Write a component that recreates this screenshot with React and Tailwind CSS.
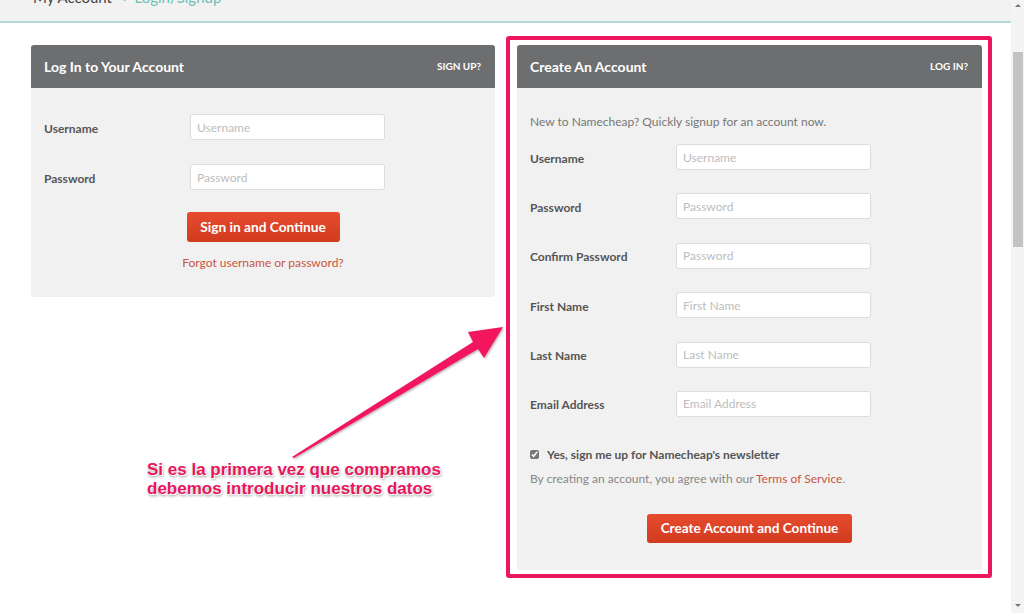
import { useState } from 'react'

const font = { fontFamily: 'Lato, "Open Sans", sans-serif' }

function Field({ label, placeholder, type = 'text' }) {
  return (
    <div className="flex items-center">
      <label className="w-[146px] pt-[3px] text-[12px] font-bold text-[#555]">{label}</label>
      <input
        type={type}
        placeholder={placeholder}
        className="h-[26px] w-[195px] rounded-[3px] border border-[#dcdcdc] bg-white px-[6px] text-[12px] text-[#555] outline-none placeholder:text-[#bdbdbd]"
      />
    </div>
  )
}

function PanelHeader({ title, link }) {
  return (
    <div className="flex h-[43px] items-center justify-between rounded-t-[3px] bg-[#6d6e70] pl-[13px] pr-[14px]">
      <h2 className="text-[14px] font-bold text-white">{title}</h2>
      <a href="#" className="text-[10px] font-bold text-white">{link}</a>
    </div>
  )
}

function LoginPanel() {
  return (
    <div className="mt-[9px] w-[464px]">
      <PanelHeader title="Log In to Your Account" link="SIGN UP?" />
      <div className="flex h-[209px] flex-col rounded-b-[3px] bg-[#f1f1f1] px-[13px] pt-[26px]">
        <div className="flex flex-col gap-[24px]">
          <Field label="Username" placeholder="Username" />
          <Field label="Password" placeholder="Password" type="password" />
        </div>
        <button className="mx-auto mt-[22px] h-[30px] w-[153px] rounded-[3px] bg-gradient-to-b from-[#e64b2e] to-[#d23b20] text-[13.7px] font-bold text-white">
          Sign in and Continue
        </button>
        <a href="#" className="mx-auto mt-[12px] text-[12px] text-[#c8563f]">Forgot username or password?</a>
      </div>
    </div>
  )
}

function SignupPanel() {
  const [newsletter, setNewsletter] = useState(true)
  return (
    <div className="ml-[11px] w-[486px] rounded-[3px] border-4 border-[#ee1560] pb-[4px] pl-[7px] pr-[2px] pt-[5px]">
      <div className="w-[465px]">
        <PanelHeader title="Create An Account" link="LOG IN?" />
        <div className="flex flex-col rounded-b-[3px] bg-[#f1f1f1] px-[13px] pb-[27px] pt-[26px]">
          <p className="text-[12px] leading-[16px] text-[#777]">New to Namecheap? Quickly signup for an account now.</p>
          <div className="mt-[14px] flex flex-col gap-[23.4px]">
            <Field label="Username" placeholder="Username" />
            <Field label="Password" placeholder="Password" type="password" />
            <Field label="Confirm Password" placeholder="Password" type="password" />
            <Field label="First Name" placeholder="First Name" />
            <Field label="Last Name" placeholder="Last Name" />
            <Field label="Email Address" placeholder="Email Address" />
          </div>
          <label className="mt-[30px] flex h-[16px] items-center gap-[8px] text-[12px] font-bold text-[#555]">
            <input
              type="checkbox"
              checked={newsletter}
              onChange={() => setNewsletter(!newsletter)}
              className="h-[9px] w-[9px] accent-[#777]"
            />
            Yes, sign me up for Namecheap's newsletter
          </label>
          <p className="mt-[8px] text-[12px] leading-[16px] text-[#888]">
            By creating an account, you agree with our <a href="#" className="text-[#c8563f]">Terms of Service</a>.
          </p>
          <button className="mx-auto mt-[27px] h-[29px] w-[205px] rounded-[3px] bg-gradient-to-b from-[#e64b2e] to-[#d23b20] text-[13.6px] font-bold text-white">
            Create Account and Continue
          </button>
        </div>
      </div>
    </div>
  )
}

function Annotation() {
  return (
    <>
      <svg className="pointer-events-none absolute left-0 top-0" width="1010" height="613">
        <defs>
          <filter id="sh" x="-10%" y="-10%" width="120%" height="120%">
            <feDropShadow dx="1" dy="1" stdDeviation="1" floodColor="#000" floodOpacity="0.35" />
          </filter>
        </defs>
        <polygon
          points="292,457 473,342 468,332 503,327 484,358 478,349 294,458"
          fill="#f2185e"
          filter="url(#sh)"
        />
      </svg>
      <div
        className="pointer-events-none absolute left-[147px] top-[460px] text-[17px] font-bold leading-[19px] text-[#e8155d]"
        style={{
          fontFamily: '"Liberation Sans", Arial, sans-serif',
          textShadow: '0 0 2px #fff, 1px 1px 0 #fff, 1px 2px 3px rgba(0,0,0,0.45)',
        }}
      >
        Si es la primera vez que compramos
        <br />
        debemos introducir nuestros datos
      </div>
    </>
  )
}

export default function App() {
  return (
    <div className="flex h-[613px] w-[1024px] overflow-hidden bg-white" style={font}>
      <div className="relative flex-1">
        <div className="h-[23px] overflow-hidden border-b-2 border-[#b4dad6] bg-[#f2f2f2]">
          <div className="-mt-[14px] pl-[33px] text-[15px]">
            <span className="text-[#444]">My Account</span>
            <span className="ml-[10px] text-[#6cc0b8]">&gt; Login/Signup</span>
          </div>
        </div>
        <div className="flex items-start pl-[31px] pt-[13px]">
          <LoginPanel />
          <SignupPanel />
        </div>
        <Annotation />
      </div>
      <div className="flex w-[13px] flex-col items-center bg-[#f4f4f4]">
        <div className="mt-[4px] h-0 w-0 border-x-[3px] border-b-[3px] border-x-transparent border-b-[#777]" />
        <div className="mt-[45px] h-[195px] w-[10px] bg-[#c3c3c3]" />
        <div className="flex-1" />
        <div className="mb-[6px] h-0 w-0 border-x-[3px] border-t-[3px] border-x-transparent border-t-[#777]" />
      </div>
    </div>
  )
}
